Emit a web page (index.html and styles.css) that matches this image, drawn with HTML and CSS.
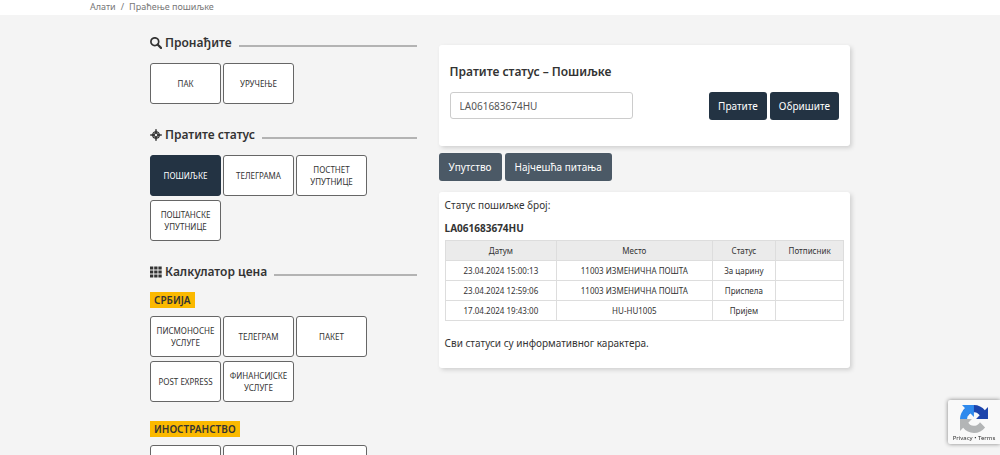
FILE: index.html
```html
<!DOCTYPE html>
<html lang="sr">
<head>
<meta charset="utf-8">
<title>Праћење пошиљке</title>
<link rel="stylesheet" href="styles.css">
</head>
<body>
<nav class="breadcrumb"><a href="#">Алати</a><span>/</span><a href="#">Праћење пошиљке</a></nav>
<div class="container">
  <aside class="sidebar">
    <section class="group">
      <h2 class="group-title">
        <svg class="icon" viewBox="0 0 12 12"><circle cx="4.8" cy="4.7" r="3.9" fill="none" stroke="currentColor" stroke-width="1.7"/><path d="M7.6 7.5L11 10.9" stroke="currentColor" stroke-width="2.2" stroke-linecap="round"/></svg>
        Пронађите
      </h2>
      <div class="tiles">
        <button class="tile">ПАК</button>
        <button class="tile">УРУЧЕЊЕ</button>
      </div>
    </section>
    <section class="group">
      <h2 class="group-title">
        <svg class="icon" viewBox="0 0 12 12"><circle cx="6" cy="6" r="3.3" fill="none" stroke="currentColor" stroke-width="1.1"/><path d="M6 0L7.2 4.8H4.8ZM6 12L4.8 7.2H7.2ZM0 6L4.8 4.8V7.2ZM12 6L7.2 7.2V4.8Z" fill="currentColor" stroke="currentColor" stroke-width=".6"/><circle cx="6" cy="6" r="1" fill="#f4f4f4"/></svg>
        Пратите статус
      </h2>
      <div class="tiles">
        <button class="tile tile-active">ПОШИЉКЕ</button>
        <button class="tile">ТЕЛЕГРАМА</button>
        <button class="tile">ПОСТНЕТ УПУТНИЦЕ</button>
        <button class="tile">ПОШТАНСКЕ УПУТНИЦЕ</button>
      </div>
    </section>
    <section class="group">
      <h2 class="group-title">
        <svg class="icon" viewBox="0 0 12 12" fill="currentColor"><path d="M0 .5h3.3v3H0zM4.2.5h3.3v3H4.2zM8.4.5h3.3v3H8.4zM0 4.5h3.3v3H0zM4.2 4.5h3.3v3H4.2zM8.4 4.5h3.3v3H8.4zM0 8.5h3.3v3H0zM4.2 8.5h3.3v3H4.2zM8.4 8.5h3.3v3H8.4z"/></svg>
        Калкулатор цена
      </h2>
      <h3 class="region">СРБИЈА</h3>
      <div class="tiles">
        <button class="tile">ПИСМОНОСНЕ УСЛУГЕ</button>
        <button class="tile">ТЕЛЕГРАМ</button>
        <button class="tile">ПАКЕТ</button>
        <button class="tile">POST EXPRESS</button>
        <button class="tile">ФИНАНСИЈСКЕ УСЛУГЕ</button>
      </div>
      <h3 class="region region-next">ИНОСТРАНСТВО</h3>
      <div class="tiles">
        <button class="tile"></button>
        <button class="tile"></button>
        <button class="tile"></button>
      </div>
    </section>
  </aside>
  <main class="main">
    <form class="card search">
      <h1 class="search-title"><label for="number">Пратите статус – Пошиљке</label></h1>
      <div class="search-row">
        <input class="search-input" id="number" type="text" value="LA061683674HU">
        <div class="actions">
          <button class="btn" type="button">Пратите</button>
          <button class="btn" type="button">Обришите</button>
        </div>
      </div>
    </form>
    <div class="actions help">
      <button class="btn btn-light">Упутство</button>
      <button class="btn btn-light">Најчешћа питања</button>
    </div>
    <section class="card result">
      <p class="text">Статус пошиљке број:</p>
      <p class="text number">LA061683674HU</p>
      <table class="history">
        <colgroup><col class="col-date"><col class="col-place"><col class="col-status"><col class="col-sign"></colgroup>
        <thead><tr><th>Датум</th><th>Место</th><th>Статус</th><th>Потписник</th></tr></thead>
        <tbody>
          <tr><td>23.04.2024 15:00:13</td><td>11003 ИЗМЕНИЧНА ПОШТА</td><td>За царину</td><td></td></tr>
          <tr><td>23.04.2024 12:59:06</td><td>11003 ИЗМЕНИЧНА ПОШТА</td><td>Приспела</td><td></td></tr>
          <tr><td>17.04.2024 19:43:00</td><td>HU-HU1005</td><td>Пријем</td><td></td></tr>
        </tbody>
      </table>
      <p class="text">Сви статуси су информативног карактера.</p>
    </section>
  </main>
</div>
<div class="captcha">
  <svg class="captcha-logo" viewBox="0 0 64 64">
    <path fill="#1c44ac" d="M64 31.955l-.033-1.37V4.687l-7.16 7.16C50.948 4.674 42.033.093 32.05.093c-10.4 0-19.622 4.96-25.458 12.64l11.736 11.86a15.55 15.55 0 0 1 4.754-5.334c2.05-1.6 4.952-2.906 8.968-2.906.485 0 .86.057 1.135.163 4.976.393 9.288 3.14 11.828 7.124l-8.307 8.307L64 31.953"/>
    <path fill="#2f8aed" d="M31.862.094l-1.37.033H4.594l7.16 7.16C4.58 13.147 0 22.06 0 32.046L16.26 32.046c0-.485.057-.86.163-1.135.393-4.976 3.14-9.288 7.124-11.828l8.307 8.307L31.86.095"/>
    <path fill="#b3b5b6" d="M.001 32.045l.033 1.37v25.898l7.16-7.16c5.86 7.173 14.774 11.754 24.76 11.754 10.4 0 19.622-4.96 25.458-12.64l-11.736-11.86a15.55 15.55 0 0 1-4.754 5.334c-2.05 1.6-4.952 2.906-8.968 2.906-.485 0-.86-.057-1.135-.163-4.976-.393-9.288-3.14-11.828-7.124l8.307-8.307c-10.522.04-22.4.066-27.295-.005"/>
  </svg>
  <div class="captcha-links"><a href="#">Privacy</a> • <a href="#">Terms</a></div>
</div>
</body>
</html>
```
FILE: styles.css
```css
* { box-sizing: border-box; margin: 0; padding: 0; }
body {
  height: 100vh;
  overflow: hidden;
  background: #f4f4f4;
  color: #333;
  font-family: "Noto Sans", sans-serif;
  font-size: 10px;
}
a { color: inherit; text-decoration: none; }
button { font: inherit; cursor: pointer; }
.breadcrumb {
  display: flex;
  gap: 5px;
  padding: 1px 90px 2px;
  background: #fff;
  color: #777;
  font-size: 9px;
  line-height: 12px;
}
.container {
  display: grid;
  grid-template-columns: 267fr 412fr;
  gap: 22px;
  width: 70%;
  margin: 0 auto;
  padding-top: 18px;
}
.group { margin-bottom: 21px; }
.group-title {
  display: flex;
  align-items: center;
  gap: 3px;
  margin-bottom: 10px;
  font-size: 12px;
  font-weight: 600;
  line-height: 20px;
}
.group-title::after {
  content: "";
  flex: 1;
  height: 2px;
  margin: 6px 0 0 4px;
  background: #b3b3b3;
}
.icon { flex: none; width: 12px; height: 12px; }
.tiles { display: flex; flex-wrap: wrap; gap: 4px 2px; padding-right: 40px; }
.tile {
  width: 71px;
  height: 41px;
  border: 1px solid #666;
  border-radius: 3px;
  background: #fff;
  color: #333;
  font-size: 8px;
  line-height: 12px;
}
.tile-active { background: #233343; border-color: #233343; color: #fff; }
.region {
  width: fit-content;
  margin-bottom: 8px;
  padding: 0 4px;
  background: #fbb900;
  font-size: 10px;
  font-weight: 600;
  line-height: 16px;
}
.region-next { margin-top: 19px; }
.main { padding-top: 12px; }
.card { border-radius: 3px; background: #fff; box-shadow: 2px 2px 4px #d0d0d0; }
.search { padding: 18px 11px 26px; }
.search-title { margin-bottom: 11px; font-size: 12px; font-weight: 600; line-height: 18px; }
.search-row { display: flex; justify-content: space-between; align-items: flex-start; }
.search-input {
  width: 47%;
  height: 27px;
  padding: 0 9px;
  border: 1px solid #ccc;
  border-radius: 3px;
  color: #555;
  font: inherit;
}
.actions { display: flex; gap: 3px; }
.btn {
  height: 28px;
  padding: 0 9px;
  border: 0;
  border-radius: 3px;
  background: #233343;
  color: #fff;
}
.btn-light { padding: 0 10px; background: #4b5966; }
.help { margin: 7px 0 11px; }
.result { padding: 4px 6px 16px; }
.text { line-height: 18px; }
.number { margin: 5px 0 3px; font-weight: 700; }
.history {
  width: 100%;
  margin-bottom: 13px;
  border-collapse: collapse;
  table-layout: fixed;
  font-size: 8px;
  line-height: 12px;
  text-align: center;
}
.history th, .history td { height: 20px; border: 1px solid #ddd; }
.history th { background: #ebebeb; font-weight: 400; }
.col-date { width: 28%; }
.col-place { width: 39%; }
.col-status { width: 16%; }
.col-sign { width: 17%; }
.captcha {
  position: fixed;
  right: 0;
  bottom: 11px;
  width: 52px;
  height: 44px;
  padding-top: 5px;
  border-radius: 2px 0 0 2px;
  background: #f9f9f9;
  box-shadow: 0 0 4px #808080;
  text-align: center;
}
.captcha-logo { display: block; width: 28px; height: 28px; margin: 0 auto; }
.captcha-links { font-size: 6px; line-height: 11px; }
```
